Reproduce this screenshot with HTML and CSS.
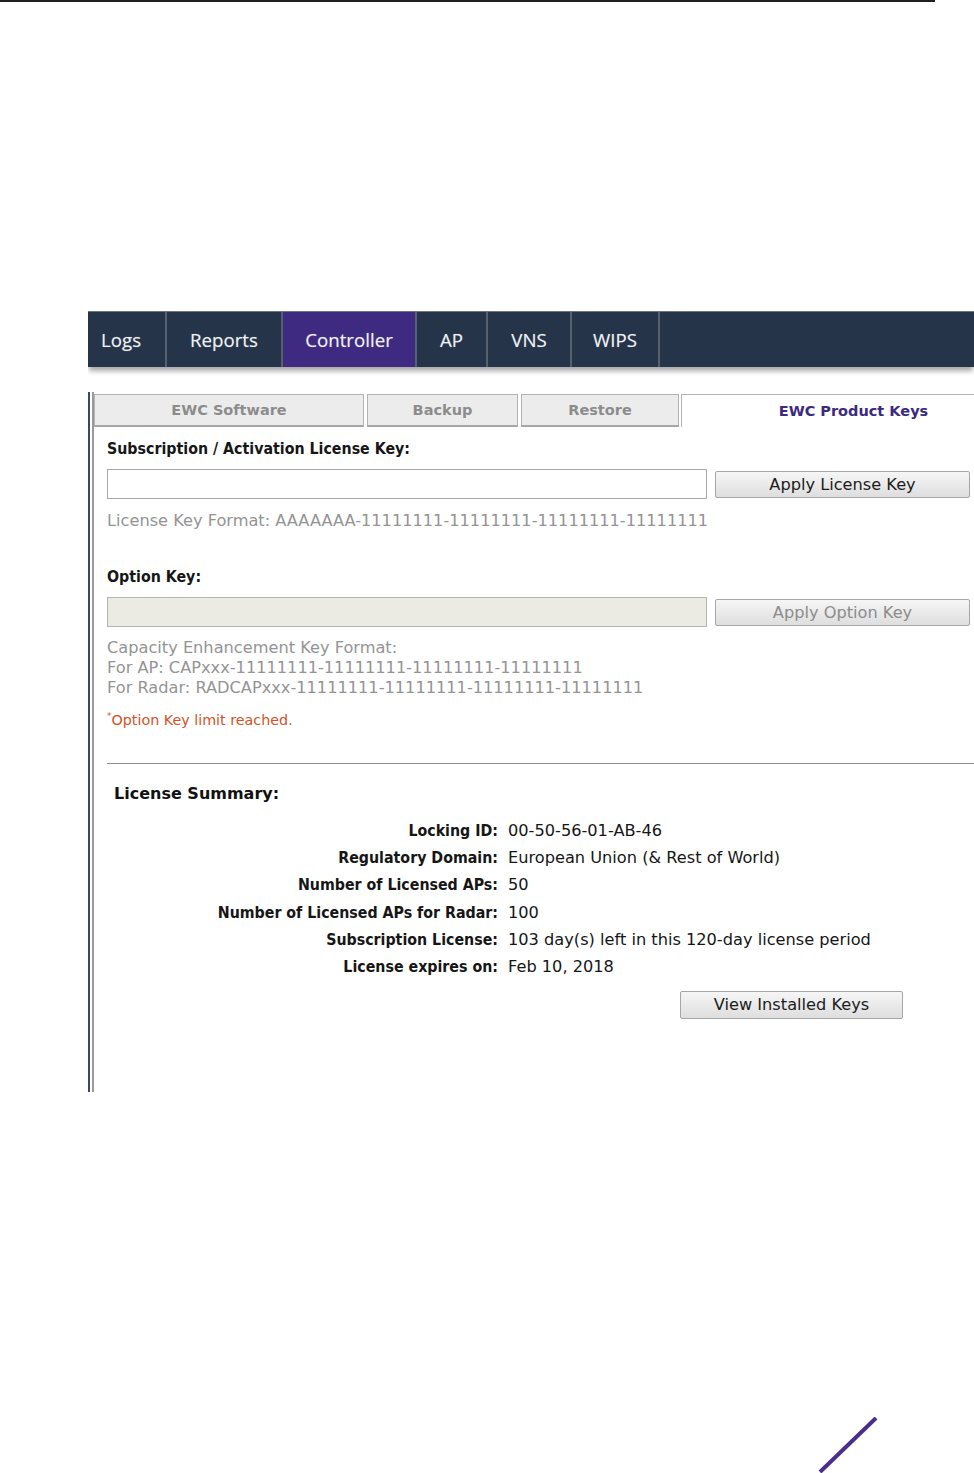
FILE: index.html
```html
<!DOCTYPE html>
<html lang="en">
<head>
  <meta charset="UTF-8">
  <meta name="viewport" content="width=device-width, initial-scale=1.0">
  <title>EWC Product Keys</title>
  <link rel="stylesheet" href="styles.css">
</head>
<body>

  <div class="page-rule"></div>

  <div class="screen">
    <div class="topnav">
      <div class="nav-item w-logs">Logs</div>
      <div class="nav-item w-reports">Reports</div>
      <div class="nav-item w-controller active">Controller</div>
      <div class="nav-item w-ap">AP</div>
      <div class="nav-item w-vns">VNS</div>
      <div class="nav-item w-wips">WIPS</div>
    </div>

    <div class="panel">
      <div class="panel-inner">
        <div class="subtabs">
          <div class="subtab w-sw">EWC Software</div>
          <div class="subtab w-backup">Backup</div>
          <div class="subtab w-restore">Restore</div>
          <div class="subtab current">EWC Product Keys</div>
        </div>

        <div class="form">
          <div class="label lbl-sub">Subscription / Activation License Key:</div>
          <div class="key-row">
            <input class="key-input" type="text">
            <button class="btn">Apply License Key</button>
          </div>
          <div class="hint hint-lic">License Key Format: AAAAAAA-11111111-11111111-11111111-11111111</div>

          <div class="label lbl-opt">Option Key:</div>
          <div class="key-row">
            <input class="key-input" type="text" disabled>
            <button class="btn" disabled>Apply Option Key</button>
          </div>
          <div class="hint hint-cap">
            Capacity Enhancement Key Format:<br>
            For AP: CAPxxx-11111111-11111111-11111111-11111111<br>
            For Radar: RADCAPxxx-11111111-11111111-11111111-11111111
          </div>
          <div class="warn"><sup>*</sup>Option Key limit reached.</div>
        </div>

        <hr class="divider">

        <div class="summary-title">License Summary:</div>
        <div class="summary">
          <div class="s-label">Locking ID:</div><div class="s-value">00-50-56-01-AB-46</div>
          <div class="s-label">Regulatory Domain:</div><div class="s-value">European Union (&amp; Rest of World)</div>
          <div class="s-label">Number of Licensed APs:</div><div class="s-value">50</div>
          <div class="s-label">Number of Licensed APs for Radar:</div><div class="s-value">100</div>
          <div class="s-label">Subscription License:</div><div class="s-value">103 day(s) left in this 120-day license period</div>
          <div class="s-label">License expires on:</div><div class="s-value">Feb 10, 2018</div>
        </div>
        <button class="btn btn-view">View Installed Keys</button>
      </div>
    </div>
  </div>

  <div class="page-foot">
    <svg width="60" height="56" viewBox="0 0 60 56">
      <line x1="2" y1="55" x2="58" y2="1" stroke="#4a2d8c" stroke-width="4"/>
    </svg>
  </div>

</body>
</html>
```

FILE: styles.css
```css
html, body {
  overflow: hidden;
}

body {
  margin: 0;
  padding: 0;
  min-height: 1473px;
  display: flex;
  flex-direction: column;
  background: #fff;
  font-family: "DejaVu Sans", Verdana, sans-serif;
}

.page-rule {
  width: 935px;
  height: 2px;
  background: #231f20;
}

.screen {
  width: 886px;
  margin-top: 309px;
  margin-left: 88px;
  overflow: hidden;
  padding-bottom: 2px;
}

/* top navigation */
.topnav {
  display: flex;
  height: 56px;
  background: #253448;
  border-top: 1px solid #6b7480;
  box-sizing: border-box;
  box-shadow: 0 5px 5px -1px rgba(0, 0, 0, 0.35);
  font-family: "Open Sans", sans-serif;
  font-size: 18.7px;
  color: #eef1f5;
}

.nav-item {
  display: flex;
  align-items: center;
  justify-content: center;
  border-right: 2px solid #56606e;
  box-sizing: border-box;
  text-shadow: 0 0 1px rgba(255, 255, 255, 0.4);
}

.nav-item.active {
  background: #3e2a80;
}

.w-logs { width: 79px; justify-content: flex-start; padding-left: 13px; }
.w-reports { width: 116px; }
.w-controller { width: 134px; }
.w-ap { width: 71px; }
.w-vns { width: 84px; }
.w-wips { width: 88px; }

/* content panel */
.panel {
  margin-top: 25px;
  border-left: 2px solid #3b4861;
  padding-left: 2px;
}

.panel-inner {
  border-left: 2px solid #9a9a9a;
  height: 700px;
  padding-top: 2px;
  box-sizing: border-box;
}

.subtabs {
  display: flex;
  height: 33px;
  font-size: 14.5px;
  font-weight: bold;
}

.subtab {
  display: flex;
  align-items: center;
  justify-content: center;
  flex-shrink: 0;
  box-sizing: border-box;
  background: #ececec;
  border: 1px solid #b4b4b4;
  border-bottom: 2px solid #a6a6a6;
  color: #8c8c8c;
  margin-right: 3px;
}

.w-sw { width: 270px; }
.w-backup { width: 151px; }
.w-restore { width: 158px; margin-right: 2px; }

.subtab.current {
  width: 344px;
  margin-right: 0;
  background: #fff;
  border: none;
  border-top: 1px solid #b4b4b4;
  border-left: 1px solid #b4b4b4;
  color: #3b2a7e;
}

.form {
  padding-left: 13px;
}

.label {
  font-family: "DejaVu Sans Condensed", "DejaVu Sans", sans-serif;
  font-stretch: condensed;
  font-size: 15.8px;
  line-height: 20px;
  font-weight: bold;
  color: #161616;
}

.lbl-sub { margin-top: 12px; }
.lbl-opt { margin-top: 36px; }

.key-row {
  display: flex;
  align-items: center;
  margin-top: 10px;
}

.key-input {
  width: 600px;
  height: 30px;
  box-sizing: border-box;
  margin: 0;
  border: 1px solid #a9a9a9;
  background: #fff;
}

.key-input:disabled {
  background: #ebebe4;
  border-color: #b5b5b0;
}

.btn {
  width: 255px;
  height: 27px;
  margin: 0 0 0 8px;
  padding: 0;
  border: 1px solid #a6a6a6;
  border-radius: 2px;
  background: linear-gradient(#f6f6f6, #dedede);
  font-family: "DejaVu Sans", Verdana, sans-serif;
  font-size: 16.2px;
  color: #1c1c1c;
}

.btn:disabled {
  color: #8c8c8c;
}

.hint {
  font-size: 16.2px;
  line-height: 20px;
  color: #949494;
}

.hint-lic { margin-top: 12px; }
.hint-cap { margin-top: 11px; }

.warn {
  margin-top: 13px;
  font-size: 14.3px;
  line-height: 18px;
  color: #d4521f;
}

.warn sup {
  font-size: 9px;
  line-height: 0;
}

.divider {
  margin: 34px 0 0 13px;
  border: none;
  border-top: 1px solid #8d8d8d;
  height: 0;
}

.summary-title {
  margin: 20px 0 0 20px;
  font-size: 16px;
  line-height: 20px;
  font-weight: bold;
  color: #111;
}

.summary {
  display: grid;
  grid-template-columns: 404px 1fr;
  column-gap: 10px;
  row-gap: 7.2px;
  margin-top: 17px;
  font-size: 16.2px;
  line-height: 20px;
  color: #161616;
}

.s-label {
  text-align: right;
  font-family: "DejaVu Sans Condensed", "DejaVu Sans", sans-serif;
  font-stretch: condensed;
  font-size: 15.8px;
  font-weight: bold;
}

.btn-view {
  display: block;
  width: 223px;
  height: 28px;
  margin: 14px 0 0 586px;
}

.page-foot {
  margin-top: auto;
  display: flex;
  justify-content: flex-end;
  padding-right: 96px;
  line-height: 0;
}
```
